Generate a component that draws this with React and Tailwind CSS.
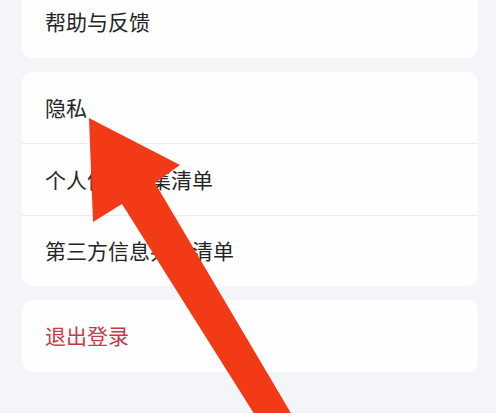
import React from 'react';

const font = { fontFamily: '"Noto Sans CJK SC", "Noto Sans", sans-serif' };

const Row = ({ label, danger, divider }) => (
    <div className={`h-[71.5px] flex items-center pl-[23px] ${divider ? 'border-t border-[#ececef]' : ''}`}>
        <span className={`text-[21px] leading-none ${danger ? 'text-[#c63a4c]' : 'text-[#242424]'}`}>{label}</span>
    </div>
);

const Card = ({ children }) => (
    <div className="bg-[#fefefe] rounded-[10px] overflow-hidden">{children}</div>
);

export default function App() {
    return (
        <div className="relative w-[496px] h-[413px] overflow-hidden bg-[#f4f5f8]" style={font}>
            <div className="mt-[-14px] pl-[22px] pr-[18px] flex flex-col gap-[14px]">
                <Card>
                    <Row label="帮助与反馈" />
                </Card>
                <Card>
                    <Row label="隐私" />
                    <Row label="个人信息收集清单" divider />
                    <Row label="第三方信息共享清单" divider />
                </Card>
                <Card>
                    <Row label="退出登录" danger />
                </Card>
            </div>

            {/* annotation arrow */}
            <svg className="absolute inset-0 pointer-events-none" width="496" height="413" viewBox="0 0 496 413">
                <polygon
                    points="89,118 180,165 155,183 295,420 258,420 122,204 93,222"
                    fill="#f23a17"
                />
            </svg>
        </div>
    );
}
